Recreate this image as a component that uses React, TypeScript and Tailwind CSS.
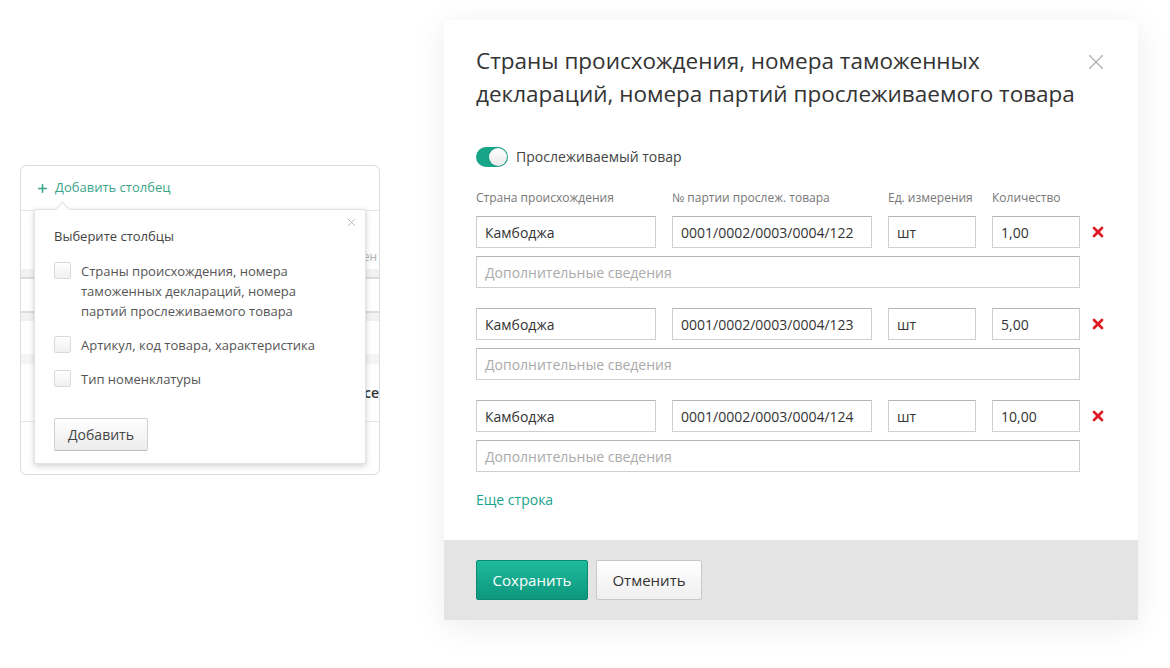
import { Plus, X } from "lucide-react";

const rows = [
    { country: "Камбоджа", batch: "0001/0002/0003/0004/122", unit: "шт", qty: "1,00" },
    { country: "Камбоджа", batch: "0001/0002/0003/0004/123", unit: "шт", qty: "5,00" },
    { country: "Камбоджа", batch: "0001/0002/0003/0004/124", unit: "шт", qty: "10,00" },
];

const columns = [
    "Страны происхождения, номера таможенных деклараций, номера партий прослеживаемого товара",
    "Артикул, код товара, характеристика",
    "Тип номенклатуры",
];

function Field({ value, className }: { value: string; className: string }) {
    return (
        <div className={`h-8 shrink-0 flex items-center px-2 border border-[#cfcfcf] border-t-[#b5b5b5] bg-white text-[14px] text-[#333] ${className}`}>
            {value}
        </div>
    );
}

function ColumnPicker() {
    return (
        <div className="relative w-[360px] h-[310px] rounded-md border border-[#dcdcdc] bg-white overflow-hidden">
            {/* header */}
            <div className="h-[45px] flex items-center pl-[15px] border-b border-[#e6e6e6] text-[13px] text-[#3aa68a]">
                <Plus className="w-[13px] h-[13px] mr-[6px]" strokeWidth={3} />
                <span>Добавить столбец</span>
            </div>

            {/* table underneath the popover */}
            <div className="h-[58px] flex items-end justify-end pb-[3px] pr-[2px] text-[12px] text-[#b0b0b0]">Сведен</div>
            <div className="h-[10px] bg-[#f2f2f2] border-b-2 border-[#dcdcdc]" />
            <div className="h-[32px]" />
            <div className="h-[10px] bg-[#f2f2f2] border-t-2 border-[#dcdcdc]" />
            <div className="h-[33px]" />
            <div className="h-[10px] bg-[#f4f4f4]" />
            <div className="h-[57px] flex items-center justify-end text-[14px] font-semibold text-[#333]">Все</div>
            <div className="border-t border-[#e6e6e6]" />

            {/* popover */}
            <div className="absolute left-[13px] top-[43px] w-[332px] h-[255px] bg-white border border-[#e2e2e2] shadow-[0_2px_6px_rgba(0,0,0,0.18)] px-[19px] pt-[16px]">
                <div className="absolute -top-[6px] left-[22px] w-[11px] h-[11px] rotate-45 bg-white border-l border-t border-[#e2e2e2]" />
                <X className="absolute right-[7px] top-[6px] w-[13px] h-[13px] text-[#aaa]" strokeWidth={1.5} />
                <div className="text-[13px] text-[#444] leading-[20px]">Выберите столбцы</div>
                <div className="mt-[15px] flex flex-col gap-[14px]">
                    {columns.map((c) => (
                        <div key={c} className="flex items-start gap-[10px]">
                            <div className="mt-[1px] w-[17px] h-[17px] shrink-0 rounded-[2px] border border-[#dadada] bg-gradient-to-b from-white to-[#f0f0f0]" />
                            <div className="text-[13px] leading-[20px] text-[#555] w-[250px]">{c}</div>
                        </div>
                    ))}
                </div>
                <button className="mt-[29px] h-[33px] w-[94px] rounded-[2px] border border-[#d0d0d0] border-b-[#b8b8b8] bg-gradient-to-b from-white to-[#ececec] text-[14px] text-[#444]">
                    Добавить
                </button>
            </div>
        </div>
    );
}

function TraceModal() {
    return (
        <div className="w-[694px] bg-white shadow-[0_6px_30px_rgba(0,0,0,0.08)]">
            <div className="px-[32px] pt-[24px] pb-[30px]">
                <div className="flex items-start justify-between">
                    <h1 className="text-[22.5px] leading-[33px] text-[#333] font-normal">
                        Страны происхождения, номера таможенных
                        <br />
                        деклараций, номера партий прослеживаемого товара
                    </h1>
                    <X className="mt-[5px] -mr-[3px] w-[26px] h-[26px] text-[#aaa]" strokeWidth={1} />
                </div>

                <div className="mt-[36px] flex items-center gap-[8px]">
                    <div className="w-[32px] h-[20px] rounded-full bg-[#17a58a] flex items-center justify-end pr-[1px]">
                        <div className="w-[18px] h-[18px] rounded-full bg-gradient-to-b from-white to-[#e8e8e8] shadow-[0_0_1px_rgba(0,0,0,0.4)]" />
                    </div>
                    <span className="text-[14px] text-[#444]">Прослеживаемый товар</span>
                </div>

                <div className="mt-[22px] flex gap-[16px] text-[12px] text-[#777] leading-[18px]">
                    <div className="w-[180px]">Страна происхождения</div>
                    <div className="w-[200px]">№ партии прослеж. товара</div>
                    <div className="w-[88px]">Ед. измерения</div>
                    <div className="w-[88px]">Количество</div>
                </div>

                <div className="mt-[9px] flex flex-col gap-[20px]">
                    {rows.map((r) => (
                        <div key={r.batch} className="flex flex-col gap-[8px]">
                            <div className="flex items-center gap-[16px]">
                                <Field value={r.country} className="w-[180px]" />
                                <Field value={r.batch} className="w-[200px]" />
                                <Field value={r.unit} className="w-[88px]" />
                                <Field value={r.qty} className="w-[88px]" />
                                <X className="-ml-[6px] shrink-0 w-[16px] h-[16px] text-[#e01a22]" strokeWidth={4} />
                            </div>
                            <div className="w-[604px] h-8 flex items-center px-2 border border-[#cfcfcf] border-t-[#b5b5b5] text-[14px] text-[#aaa]">
                                Дополнительные сведения
                            </div>
                        </div>
                    ))}
                </div>

                <div className="mt-[17px] text-[14px] text-[#1aa38a]">Еще строка</div>
            </div>

            <div className="h-[80px] bg-[#e4e4e4] flex items-center gap-[8px] px-[32px]">
                <button className="h-[40px] w-[112px] rounded-[2px] bg-gradient-to-b from-[#1cbb9b] to-[#0e977e] border border-[#0d8a72] text-white text-[15px]">
                    Сохранить
                </button>
                <button className="h-[40px] w-[106px] rounded-[2px] bg-gradient-to-b from-white to-[#efefef] border border-[#c8c8c8] text-[#333] text-[15px]">
                    Отменить
                </button>
            </div>
        </div>
    );
}

export default function App() {
    return (
        <div className="w-[1170px] h-[668px] bg-white flex items-start font-['Open_Sans',sans-serif]">
            <div className="w-[444px] pl-[20px] pt-[165px]">
                <ColumnPicker />
            </div>
            <div className="pt-[20px]">
                <TraceModal />
            </div>
        </div>
    );
}
